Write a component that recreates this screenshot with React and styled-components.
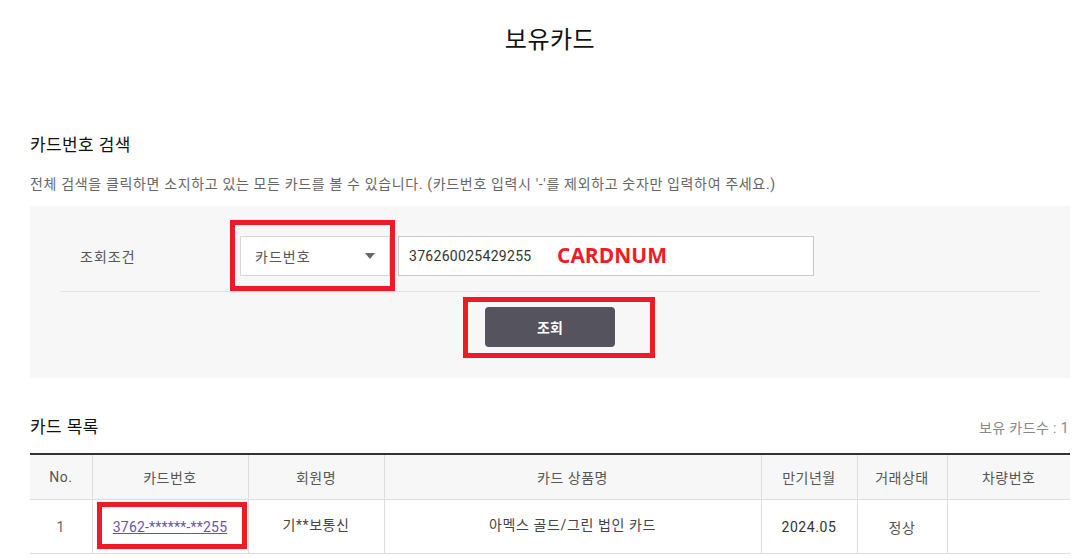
import React from "react";
import styled, { createGlobalStyle } from "styled-components";

const GlobalStyle = createGlobalStyle`
  body {
    margin: 0;
    background: #fff;
    font-family: Roboto, "Noto Sans CJK KR", sans-serif;
    color: #333;
  }
`;

const columns = [
  { title: "No.", width: 62 },
  { title: "카드번호", width: 156 },
  { title: "회원명", width: 136 },
  { title: "카드 상품명", width: 377 },
  { title: "만기년월", width: 96 },
  { title: "거래상태", width: 90 },
  { title: "차량번호", width: 123 },
];

function App() {
  return (
    <Page>
      <GlobalStyle />
      <PageTitle>보유카드</PageTitle>

      <SectionTitle>카드번호 검색</SectionTitle>
      <Description>
        전체 검색을 클릭하면 소지하고 있는 모든 카드를 볼 수 있습니다. (카드번호
        입력시 '-'를 제외하고 숫자만 입력하여 주세요.)
      </Description>

      <SearchPanel>
        <SearchRow>
          <FieldLabel>조회조건</FieldLabel>
          <SelectBox>
            <span>카드번호</span>
            <svg width="10" height="6" viewBox="0 0 10 6">
              <path d="M0 0h10L5 6z" fill="#666" />
            </svg>
            <Highlight $top={-17} $right={-6} $bottom={-16} $left={-11} />
          </SelectBox>
          <TextInput>
            376260025429255
            <Annotation>CARDNUM</Annotation>
          </TextInput>
        </SearchRow>
        <ButtonRow>
          <SearchButton>
            조회
            <Highlight $top={-10} $right={-40} $bottom={-11} $left={-22} />
          </SearchButton>
        </ButtonRow>
      </SearchPanel>

      <ListHeader>
        <SectionTitle as="h3">카드 목록</SectionTitle>
        <CardCount>보유 카드수 : 1</CardCount>
      </ListHeader>

      <Table>
        <colgroup>
          {columns.map((c) => (
            <col key={c.title} style={{ width: c.width }} />
          ))}
        </colgroup>
        <thead>
          <tr>
            {columns.map((c) => (
              <Th key={c.title}>{c.title}</Th>
            ))}
          </tr>
        </thead>
        <tbody>
          <tr>
            <Td $color="#666">1</Td>
            <Td>
              <CardLink href="#">3762-******-**255</CardLink>
              <Highlight $top={2} $right={1} $bottom={4} $left={4} />
            </Td>
            <Td $color="#444" $raise>
              기**보통신
            </Td>
            <Td $color="#444" $raise>
              아멕스 골드/그린 법인 카드
            </Td>
            <Td $color="#333">2024.05</Td>
            <Td $color="#555">정상</Td>
            <Td />
          </tr>
        </tbody>
      </Table>
    </Page>
  );
}

const Page = styled.div`
  width: 1040px;
  margin-left: 30px;
  padding-top: 23px;
`;

const PageTitle = styled.h1`
  margin: 0 0 76px;
  text-align: center;
  font-size: 24px;
  line-height: 34px;
  font-weight: 400;
  letter-spacing: 0.5px;
  color: #111;
`;

const SectionTitle = styled.h2`
  margin: 0;
  font-size: 17px;
  line-height: 24px;
  font-weight: 400;
  letter-spacing: 0.4px;
  color: #111;
`;

const Description = styled.p`
  margin: 17px 0 12px;
  font-size: 14px;
  line-height: 20px;
  letter-spacing: 0.65px;
  color: #666;
`;

const SearchPanel = styled.div`
  background: #f7f7f7;
  padding: 30px 30px 31px;
`;

const SearchRow = styled.div`
  display: flex;
  align-items: center;
  padding-bottom: 15px;
  border-bottom: 1px solid #e3e3e3;
`;

const FieldLabel = styled.div`
  width: 160px;
  padding-left: 20px;
  font-size: 14px;
  letter-spacing: 1px;
  color: #555;
`;

const SelectBox = styled.div`
  position: relative;
  box-sizing: border-box;
  width: 150px;
  height: 40px;
  display: flex;
  align-items: center;
  justify-content: space-between;
  padding: 0 14px 0 14px;
  background: #fff;
  border: 1px solid #d6d6d6;
  font-size: 14px;
  letter-spacing: 1px;
  color: #555;
`;

const TextInput = styled.div`
  position: relative;
  box-sizing: border-box;
  width: 416px;
  height: 40px;
  margin-left: 8px;
  display: flex;
  align-items: center;
  padding-left: 10px;
  background: #fff;
  border: 1px solid #c8c8c8;
  font-size: 14px;
  letter-spacing: 0.3px;
  color: #333;
`;

const Annotation = styled.span`
  position: absolute;
  left: 158px;
  top: 50%;
  transform: translateY(-52%);
  font-family: "Open Sans", sans-serif;
  font-weight: 700;
  font-size: 21px;
  letter-spacing: 0;
  color: #ee1c25;
`;

const Highlight = styled.span`
  position: absolute;
  top: ${(p) => p.$top}px;
  right: ${(p) => p.$right}px;
  bottom: ${(p) => p.$bottom}px;
  left: ${(p) => p.$left}px;
  border: 5px solid #ed1c24;
  pointer-events: none;
`;

const ButtonRow = styled.div`
  display: flex;
  justify-content: center;
  padding-top: 15px;
`;

const SearchButton = styled.button`
  position: relative;
  width: 130px;
  height: 40px;
  border: 0;
  border-radius: 4px;
  background: #55535d;
  color: #fff;
  font-family: "Noto Sans CJK KR", sans-serif;
  font-size: 14px;
  font-weight: 700;
`;

const ListHeader = styled.div`
  display: flex;
  justify-content: space-between;
  align-items: center;
  margin: 37px 0 14px;
`;

const CardCount = styled.span`
  font-size: 14px;
  letter-spacing: 0.4px;
  color: #888;
  margin-right: 1px;
`;

const Table = styled.table`
  width: 100%;
  table-layout: fixed;
  border-collapse: collapse;
  border-top: 2px solid #333;
  font-size: 14px;
`;

const Th = styled.th`
  height: 44px;
  padding: 0;
  background: #f7f7f7;
  border-bottom: 1px solid #ddd;
  border-left: 1px solid #ddd;
  font-weight: 400;
  letter-spacing: 0.5px;
  color: #555;
  &:first-child {
    border-left: 0;
  }
`;

const Td = styled.td`
  position: relative;
  height: 47px;
  padding: 0 0 ${(p) => (p.$raise ? "6px" : "0")};
  text-align: center;
  border-bottom: 1px solid #ddd;
  border-left: 1px solid #ddd;
  letter-spacing: 0.6px;
  color: ${(p) => p.$color || "#333"};
  &:first-child {
    border-left: 0;
  }
`;

const CardLink = styled.a`
  color: #6b51b3;
  letter-spacing: 0.2px;
  text-decoration: underline;
`;

export default App;
